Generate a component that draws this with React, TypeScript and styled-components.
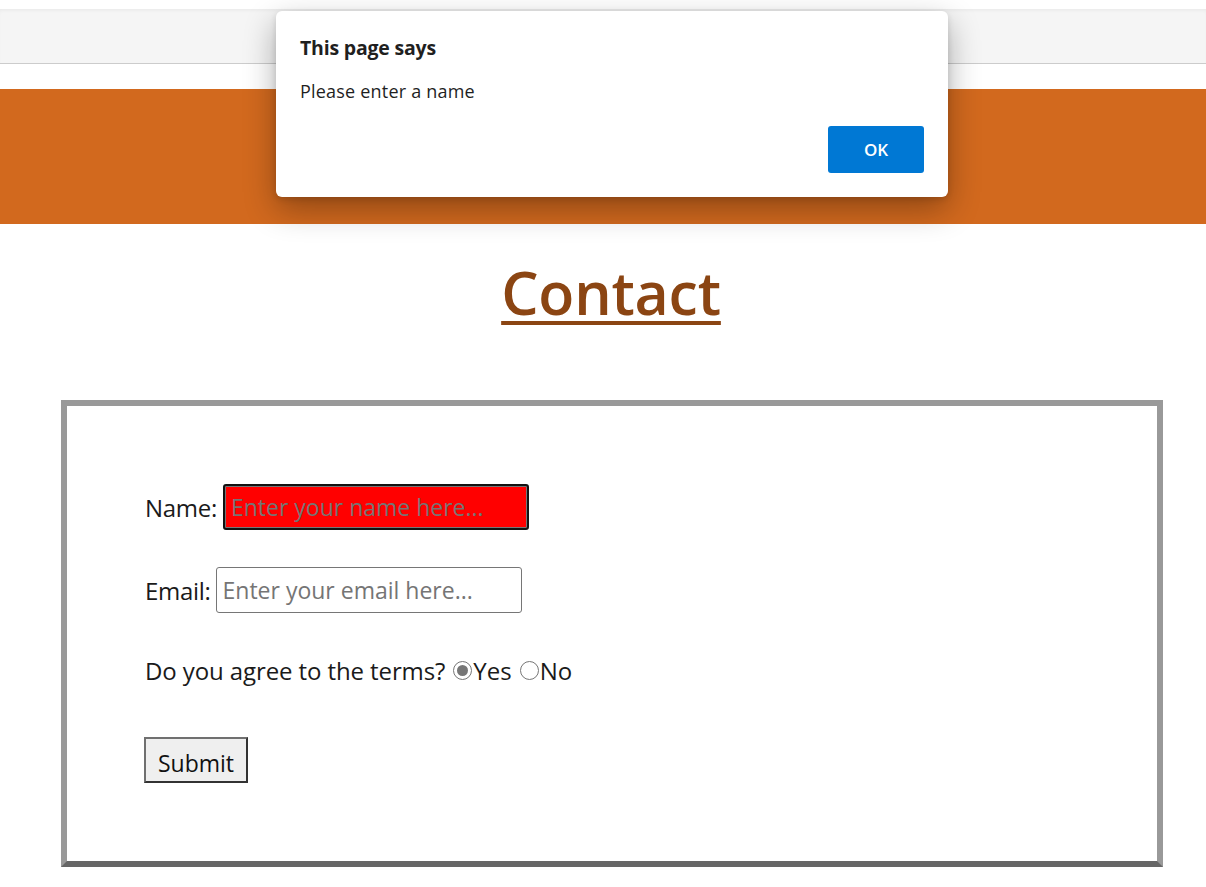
import React from "react";
import styled, { createGlobalStyle } from "styled-components";

const GlobalStyle = createGlobalStyle`
  html, body { margin: 0; padding: 0; background: #ffffff; }
  body { font-family: "Open Sans", "Noto Sans", sans-serif; color: #1a1a1a; }
  * { box-sizing: border-box; }
`;

const Page = styled.div`
  position: relative;
  width: 1206px;
  min-height: 887px;
  padding-top: 9px;
  overflow: hidden;
`;

const TopBar = styled.div`
  height: 55px;
  background: #f5f5f5;
  border-bottom: 1px solid #cccccc;
  box-shadow: inset 0 3px 4px -2px rgba(0, 0, 0, 0.06);
`;

const Banner = styled.header`
  margin-top: 25px;
  height: 135px;
  background: #d2691e;
`;

const Title = styled.h1`
  margin: 26px 0 0;
  text-align: center;
  font-family: "Open Sans", sans-serif;
  font-weight: 600;
  font-size: 59px;
  line-height: 84px;
  letter-spacing: -0.2px;
  color: #8b4513;
  text-decoration: underline;
  text-decoration-thickness: 4px;
  text-underline-offset: 6px;
  padding-left: 16px;
`;

const FormBox = styled.form`
  margin: 66px 43px 0 61px;
  height: 467px;
  border: 6px solid #999999;
  border-bottom-color: #666666;
  padding: 78px 0 0 78px;
  display: flex;
  flex-direction: column;
  align-items: flex-start;
  font-size: 24px;
  color: #1a1a1a;
`;

const Row = styled.div<{ $gap: number }>`
  display: flex;
  align-items: center;
  height: 46px;
  margin-bottom: ${(p) => p.$gap}px;
  white-space: nowrap;
`;

const Label = styled.label<{ $space: number }>`
  margin-right: ${(p) => p.$space}px;
  letter-spacing: -0.3px;
`;

const Question = styled.span`
  letter-spacing: -0.1px;
`;

const TextInput = styled.input<{ $invalid?: boolean }>`
  width: 306px;
  height: 46px;
  font-family: "Open Sans", sans-serif;
  font-size: 23px;
  padding: 0 6px;
  border-radius: 3px;
  background: ${(p) => (p.$invalid ? "#ff0000" : "#ffffff")};
  border: ${(p) => (p.$invalid ? "2px solid #111111" : "1px solid #767676")};
  box-shadow: ${(p) => (p.$invalid ? "inset 0 0 0 1px #767676" : "none")};
  outline: none;
  &::placeholder {
    color: #757575;
  }
`;

const Radio = styled.span<{ $checked?: boolean }>`
  display: inline-block;
  width: 19px;
  height: 19px;
  border-radius: 50%;
  border: 1px solid #767676;
  background: #ffffff;
  margin: 0 1px 0 8px;
  position: relative;
  &::after {
    content: "";
    display: ${(p) => (p.$checked ? "block" : "none")};
    position: absolute;
    inset: 3px;
    border-radius: 50%;
    background: #767676;
  }
`;

const RadioText = styled.span``;

const SubmitButton = styled.button`
  margin-left: -1px;
  width: 104px;
  height: 46px;
  font-family: "Open Sans", sans-serif;
  font-size: 23px;
  line-height: 1;
  padding: 6px 0 0;
  color: #111111;
  background: #efefef;
  border: 2px solid;
  border-color: #707070 #333333 #333333 #707070;
`;

const Dialog = styled.div`
  position: absolute;
  left: 276px;
  top: 11px;
  width: 672px;
  height: 186px;
  background: #ffffff;
  border-radius: 6px;
  box-shadow: 0 12px 32px rgba(0, 0, 0, 0.32), 0 2px 6px rgba(0, 0, 0, 0.12);
  padding: 24px;
  display: flex;
  flex-direction: column;
  font-family: "Open Sans", sans-serif;
`;

const DialogTitle = styled.div`
  font-weight: 700;
  font-size: 19.5px;
  line-height: 26px;
  color: #1f1f1f;
  letter-spacing: -0.2px;
`;

const DialogMessage = styled.div`
  margin-top: 18px;
  font-size: 18px;
  line-height: 24px;
  color: #1f1f1f;
  letter-spacing: 0.2px;
`;

const DialogActions = styled.div`
  margin-top: auto;
  display: flex;
  justify-content: flex-end;
`;

const OkButton = styled.button`
  width: 96px;
  height: 47px;
  border: none;
  border-radius: 3px;
  background: #0078d4;
  color: #ffffff;
  font-family: "Open Sans", sans-serif;
  font-weight: 600;
  font-size: 17px;
`;

export default function App() {
  return (
    <>
      <GlobalStyle />
      <Page>
        <TopBar />
        <Banner />
        <Title>Contact</Title>
        <FormBox onSubmit={(e) => e.preventDefault()}>
          <Row $gap={37}>
            <Label htmlFor="name" $space={6}>Name:</Label>
            <TextInput id="name" $invalid placeholder="Enter your name here..." />
          </Row>
          <Row $gap={34}>
            <Label htmlFor="email" $space={5}>Email:</Label>
            <TextInput id="email" placeholder="Enter your email here..." />
          </Row>
          <Row $gap={44}>
            <Question>Do you agree to the terms?</Question>
            <Radio $checked />
            <RadioText>Yes</RadioText>
            <Radio />
            <RadioText>No</RadioText>
          </Row>
          <SubmitButton type="submit">Submit</SubmitButton>
        </FormBox>
        <Dialog role="alertdialog">
          <DialogTitle>This page says</DialogTitle>
          <DialogMessage>Please enter a name</DialogMessage>
          <DialogActions>
            <OkButton>OK</OkButton>
          </DialogActions>
        </Dialog>
      </Page>
    </>
  );
}
